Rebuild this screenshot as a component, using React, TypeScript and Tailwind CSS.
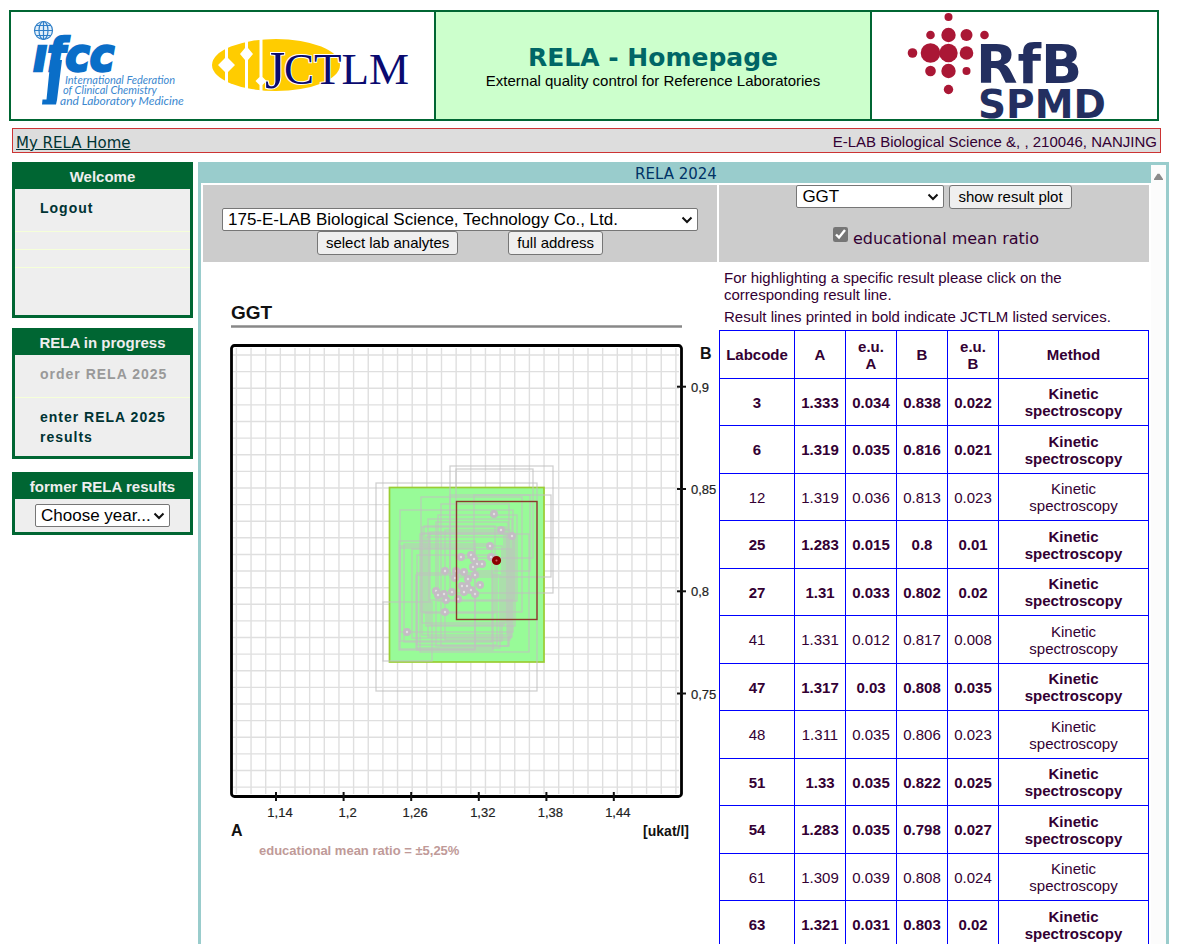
import { useState } from 'react'
import type { ReactNode } from 'react'

interface Result {
  lab: number
  a: string
  ua: string
  b: string
  ub: string
  listed: boolean
}

const results: Result[] = [
  { lab: 3, a: '1.333', ua: '0.034', b: '0.838', ub: '0.022', listed: true },
  { lab: 6, a: '1.319', ua: '0.035', b: '0.816', ub: '0.021', listed: true },
  { lab: 12, a: '1.319', ua: '0.036', b: '0.813', ub: '0.023', listed: false },
  { lab: 25, a: '1.283', ua: '0.015', b: '0.8', ub: '0.01', listed: true },
  { lab: 27, a: '1.31', ua: '0.033', b: '0.802', ub: '0.02', listed: true },
  { lab: 41, a: '1.331', ua: '0.012', b: '0.817', ub: '0.008', listed: false },
  { lab: 47, a: '1.317', ua: '0.03', b: '0.808', ub: '0.035', listed: true },
  { lab: 48, a: '1.311', ua: '0.035', b: '0.806', ub: '0.023', listed: false },
  { lab: 51, a: '1.33', ua: '0.035', b: '0.822', ub: '0.025', listed: true },
  { lab: 54, a: '1.283', ua: '0.035', b: '0.798', ub: '0.027', listed: true },
  { lab: 61, a: '1.309', ua: '0.039', b: '0.808', ub: '0.024', listed: false },
  { lab: 63, a: '1.321', ua: '0.031', b: '0.803', ub: '0.02', listed: true },
]

function IfccLogo() {
  return (
    <svg width="160" height="94" viewBox="28 16 160 94" overflow="visible" role="img" aria-label="IFCC">
      <g fill="none" stroke="#2f7fc8" strokeWidth="1.2">
        <circle cx="43.500" cy="30.500" r="9" fill="#e3f0fa" />
        <ellipse cx="43.500" cy="30.500" rx="4.500" ry="9" />
        <path d="M43.500 21.500v18M34.500 30.500h18M36 25.500h15M36 35.500h15" />
      </g>
      {/* long stem of the f */}
      <path d="M50.500 60h11.500l-5 40-1 4.500H42l.5-5h4z" fill="#0a6ec8" />
      <text x="33" y="71" fontSize="46" fontWeight="bold" fontStyle="italic" fill="#0a6ec8" stroke="#0a6ec8" strokeWidth="2.4" className="font-['DejaVu_Sans_Condensed','DejaVu_Sans',sans-serif]">ıfcc</text>
      <g fontStyle="italic" fill="#3b88cf" className="font-['Lato',sans-serif]">
        <text x="65" y="84" fontSize="11">International Federation</text>
        <text x="63" y="94" fontSize="11">of Clinical Chemistry</text>
        <text x="60" y="105" fontSize="12">and Laboratory Medicine</text>
      </g>
    </svg>
  )
}

function JctlmLogo() {
  return (
    <svg width="204" height="64" viewBox="208 34 204 64" overflow="visible" role="img" aria-label="JCTLM">
      <ellipse cx="276" cy="65" rx="64" ry="26" fill="#ffcc00" />
      <g fill="#fff">
        <path d="M225 38h3v20l7 7-7 7v20h-3V72l-7-7 7-7z" />
        <path d="M245 38h3v10l5 6-5 6v34h-3V60l-5-6 5-6z" />
        <path d="M259.500 38h3v39l4 4-4 4v9h-3v-9l-4-4 4-4z" />
      </g>
      <text x="265" y="88" fontSize="52" fill="#0a0a70" stroke="#fff" strokeWidth="2" paintOrder="stroke" className="font-['Liberation_Serif',serif]">
        J<tspan x="284" y="84" fontSize="45">CTLM</tspan>
      </text>
    </svg>
  )
}

// x, y, radius
const dots = [
  [948.5, 17, 4], [930.5, 35, 4.3], [948.5, 35, 7.2], [966.5, 35, 6], [984.5, 35, 4.3],
  [912.5, 53, 4.8], [930.5, 53, 9.8], [948.5, 53, 9.2], [966.5, 53, 6.8],
  [930.5, 71, 5.3], [948.5, 71, 7.2], [966.5, 71, 4], [948.5, 89.5, 4.7],
]

function RfbLogo() {
  return (
    <svg width="216" height="107" viewBox="907 12 216 107" overflow="visible" role="img" aria-label="RfB SPMD">
      {dots.map(([x, y, r]) => <circle key={`${x}-${y}`} cx={x} cy={y} r={r} fill="#aa1735" />)}
      <text x="976" y="83" fontSize="54" fontWeight="bold" fill="#232f60" className="font-['DejaVu_Sans',sans-serif]">
        RfB<tspan x="978" y="118" fontSize="39">SPMD</tspan>
      </text>
    </svg>
  )
}

const gridX = Array.from({ length: 31 }, (_, i) => 236.4 + i * 14.65)
const gridY = Array.from({ length: 27 }, (_, i) => 355 + i * 16.62)

const xTicks: [number, string][] = [
  [276, '1,14'], [343.6, '1,2'], [411.2, '1,26'], [478.8, '1,32'], [546.4, '1,38'], [613.8, '1,44'],
]
const yTicks: [number, string][] = [[386.7, '0,9'], [489, '0,85'], [591.3, '0,8'], [693.5, '0,75']]

// left, top, right, bottom of each uncertainty box
const boxes = [
  [376, 483, 537, 691], [450, 466, 553, 593], [456, 469, 533, 558], [450, 495, 551, 577],
  [383, 602, 432, 661], [421, 497, 522, 612], [400, 510, 513, 632], [399, 541, 475, 650],
  [404, 544, 492, 642], [441, 504, 509, 646], [438, 515, 517, 601], [422, 527, 506, 623],
  [428, 519, 512, 637], [422, 533, 507, 635], [430, 532, 504, 625], [417, 555, 497, 645],
  [417, 573, 493, 650], [412, 549, 511, 638], [420, 534, 529, 652], [474, 495, 530, 571],
  [436, 522, 508, 646], [426, 537, 515, 626], [400, 548, 475, 649], [445, 530, 510, 640],
  [416, 575, 500, 648], [424, 526, 495, 613], [429, 534, 514, 600], [400, 546, 502, 641],
]

const points = [
  [494, 514], [501, 530], [512, 536], [490, 546], [461, 557], [471, 555], [474, 559], [491, 557],
  [477, 564], [482, 564], [473, 567], [445, 571], [456, 571], [464, 572], [475, 575], [455, 578],
  [468, 579], [480, 585], [462, 586], [467, 586], [436, 591], [444, 594], [452, 592], [464, 592],
  [471, 590], [475, 594], [446, 600], [458, 599], [445, 612], [407, 632], [438, 595],
]

function YoudenPlot() {
  return (
    <svg viewBox="203 262 514 620" className="w-full" role="img" aria-label="GGT result plot">
      <g className="font-['Liberation_Sans',Arial,sans-serif]">
        <text x="231" y="319" fontSize="19" fontWeight="bold" fill="#111">GGT</text>
        <path d="M231 326.5h451" stroke="#888" strokeWidth="2.5" />
        <g stroke="#dfdfdf" strokeWidth="1.4">
          {gridX.map((x) => <path key={x} d={`M${x} 348V794`} />)}
          {gridY.map((y) => <path key={y} d={`M233 ${y}H679`} />)}
        </g>
        <rect x="389.5" y="487.5" width="154.5" height="174.5" fill="#98fb98" stroke="#9acd32" strokeWidth="1.7" />
        <g fill="none" stroke="#c0c0c0" strokeOpacity="0.8" strokeWidth="1.2">
          {boxes.map(([l, t, r, b], i) => (
            <rect key={i} x={l} y={t} width={r - l} height={b - t} />
          ))}
        </g>
        {points.map(([x, y], i) => (
          <circle key={i} cx={x} cy={y} r="2.6" fill="#e0e0e0" stroke="#c4bcc4" strokeWidth="2.8" />
        ))}
        <rect x="456.5" y="501.5" width="80.5" height="118" fill="none" stroke="#8b3a2a" strokeWidth="1.4" />
        <circle cx="496.5" cy="560.5" r="2.8" fill="#c66" stroke="#8b0000" strokeWidth="3.6" />
        <rect x="231.5" y="345.5" width="450" height="451" rx="3" fill="none" stroke="#000" strokeWidth="2.8" />
        <g stroke="#111" strokeWidth="2">
          {xTicks.map(([x]) => <path key={x} d={`M${x} 792v9`} />)}
          {yTicks.map(([y]) => <path key={y} d={`M677 ${y}h9`} />)}
        </g>
        <g fontSize="13" fill="#222" stroke="#222" strokeWidth="0.2">
          {xTicks.map(([x, label]) => <text key={x} x={x + 4} y="817" textAnchor="middle">{label}</text>)}
          {yTicks.map(([y, label]) => <text key={y} x="691" y={y + 5}>{label}</text>)}
        </g>
        <g fontWeight="bold" fill="#111">
          <text x="231" y="836" fontSize="16">A</text>
          <text x="700" y="359" fontSize="16">B</text>
          <text x="689" y="836" fontSize="14" textAnchor="end">[ukat/l]</text>
          <text x="259" y="855" fontSize="13" fill="#c09a98">educational mean ratio = ±5,25%</text>
        </g>
      </g>
    </svg>
  )
}

function Chevron() {
  return (
    <svg width="12" height="8" viewBox="0 0 12 8" className="pointer-events-none absolute right-[5px] top-2">
      <path d="M1.5 1.5 6 6l4.500-4.500" fill="none" stroke="#111" strokeWidth="2" />
    </svg>
  )
}

function Select({ label, options, className }: { label: string; options: string[]; className: string }) {
  return (
    <span className={`relative inline-block ${className}`}>
      <select aria-label={label} className="block h-[23px] w-full appearance-none rounded-[2px] border border-[#767676] bg-white pl-[5px] pr-4 text-[17px] leading-5 text-black">
        {options.map((o) => <option key={o}>{o}</option>)}
      </select>
      <Chevron />
    </span>
  )
}

function Button({ children }: { children: ReactNode }) {
  return (
    <button type="button" className="h-6 rounded-[3px] border border-[#767676] bg-[#efefef] px-2 text-[15px] leading-5 text-black">
      {children}
    </button>
  )
}

function SideBox({ title, children }: { title: string; children: ReactNode }) {
  return (
    <section className="border-[3px] border-t-0 border-[#006633] bg-[#eee]">
      <h2 className="h-[27px] bg-[#006633] pt-[5px] text-center text-[15px] font-bold leading-5 text-[#eee]">{title}</h2>
      {children}
    </section>
  )
}

export default function App() {
  const [selected, setSelected] = useState<number | null>(null)
  const [ratio, setRatio] = useState(true)

  return (
    <div className="flex h-screen flex-col overflow-hidden bg-white pt-[10px] font-['Liberation_Sans',Arial,sans-serif] text-[15px] text-[#330033]">
      <header className="ml-[9px] mr-[33px] grid h-[111px] shrink-0 grid-cols-[423fr_438fr_285fr] border-2 border-[#006633]">
        <div className="flex items-start gap-5 pl-[17px] pt-1">
          <IfccLogo />
          <div className="pt-[18px]"><JctlmLogo /></div>
        </div>
        <div className="flex flex-col items-center border-x-2 border-[#006633] bg-[#ccffcc] pt-8">
          <h1 className="font-['DejaVu_Sans',Verdana,sans-serif] text-[25px] font-bold leading-7 text-[#006666]">RELA - Homepage</h1>
          <p className="leading-[18px] text-black">External quality control for Reference Laboratories</p>
        </div>
        <div className="flex justify-center"><RfbLogo /></div>
      </header>

      <div className="ml-3 mr-[31px] mt-[7px] flex h-[25px] shrink-0 items-center justify-between border border-[#cc3333] bg-[#ddd] px-[3px]">
        <a href="#" className="pt-1 font-['DejaVu_Sans',Verdana,sans-serif] leading-5 text-[#003333] underline">My RELA Home</a>
        <span className="pt-1">E-LAB Biological Science &amp;, , 210046, NANJING</span>
      </div>

      <div className="mt-[9px] flex min-h-0 flex-1 gap-[5px] pl-3 pr-[23px]">
        <aside className="flex w-[181px] shrink-0 flex-col">
          <SideBox title="Welcome">
            <ul className="text-sm font-bold leading-5 tracking-[1px] text-[#003333]">
              <li className="h-[43px] border-b border-[#f5ffd9] pl-[25px] pt-[9px]"><a href="#">Logout</a></li>
              <li className="h-[18px] border-b border-[#f5ffd9]" />
              <li className="h-[18px] border-b border-[#f5ffd9]" />
              <li className="h-[47px]" />
            </ul>
          </SideBox>
          <div className="mt-[10px]">
            <SideBox title="RELA in progress">
              <ul className="text-sm font-bold leading-5 tracking-[1px] text-[#003333]">
                <li className="h-[43px] border-b border-[#f5ffd9] pl-[25px] pt-[9px] text-[#999]">order RELA 2025</li>
                <li className="h-[58px] pl-[25px] pr-4 pt-[9px]"><a href="#">enter RELA 2025 results</a></li>
              </ul>
            </SideBox>
          </div>
          <div className="mt-[13px]">
            <SideBox title="former RELA results">
              <div className="h-[33px] pt-[5px] text-center">
                <Select label="Year" options={['Choose year...']} className="w-[135px]" />
              </div>
            </SideBox>
          </div>
        </aside>

        <main className="flex min-w-0 flex-1 overflow-hidden border-x-[3px] border-t-[3px] border-[#99cccc]">
          <div className="min-w-0 flex-1">
            <h2 className="h-[18px] bg-[#99cccc] text-center font-['DejaVu_Sans',Verdana,sans-serif] text-[15px] leading-[18px] text-[#003366]">RELA 2024</h2>
            <div className="grid grid-cols-[514fr_430fr] gap-x-[2px] px-[2px] pt-[2px]">
              <div className="flex h-[77px] flex-col items-center bg-[#ccc] pt-[23px]">
                <Select label="Laboratory" options={['175-E-LAB Biological Science, Technology Co., Ltd.']} className="w-[476px]" />
                <div className="flex gap-[50px]">
                  <Button>select lab analytes</Button>
                  <Button>full address</Button>
                </div>
              </div>
              <div className="flex h-[77px] flex-col items-center bg-[#ccc]">
                <div className="flex gap-[5px]">
                  <Select label="Analyte" options={['GGT']} className="w-[148px]" />
                  <Button>show result plot</Button>
                </div>
                <label className="mt-[18px] flex items-start gap-[5px] pl-1 font-['DejaVu_Sans',Verdana,sans-serif] text-base leading-6">
                  <input type="checkbox" checked={ratio} onChange={(e) => setRatio(e.target.checked)} className="h-[15px] w-[15px] accent-[#767676]" />
                  educational mean ratio
                </label>
              </div>

              <YoudenPlot />

              <div>
                <div className="pl-[5px] pr-5 pt-[7px] leading-[17px]">
                  <p>For highlighting a specific result please click on the corresponding result line.</p>
                  <p className="mt-[5px]">Result lines printed in bold indicate JCTLM listed services.</p>
                </div>
                <table className="mt-[5px] w-full table-fixed border-collapse text-center leading-[17px] [&_td]:border [&_td]:border-[#0000ff] [&_th]:border [&_th]:border-[#0000ff]">
                  <colgroup>
                    <col className="w-[75px]" />
                    <col className="w-[51px]" />
                    <col className="w-[51px]" />
                    <col className="w-[51px]" />
                    <col className="w-[51px]" />
                    <col />
                  </colgroup>
                  <thead>
                    <tr className="h-12">
                      <th>Labcode</th>
                      <th>A</th>
                      <th>e.u.<br />A</th>
                      <th>B</th>
                      <th>e.u.<br />B</th>
                      <th>Method</th>
                    </tr>
                  </thead>
                  <tbody>
                    {results.map((r) => (
                      <tr
                        key={r.lab}
                        onClick={() => setSelected(r.lab)}
                        className={`odd:h-[47px] even:h-12 ${r.listed ? 'font-bold' : ''} ${selected === r.lab ? 'bg-[#ffffcc]' : ''}`}
                      >
                        <td>{r.lab}</td>
                        <td>{r.a}</td>
                        <td>{r.ua}</td>
                        <td>{r.b}</td>
                        <td>{r.ub}</td>
                        <td>Kinetic<br />spectroscopy</td>
                      </tr>
                    ))}
                  </tbody>
                </table>
              </div>
            </div>
          </div>
          <div className="flex w-[15px] shrink-0 justify-center bg-[#fcfcfc] pt-2">
            <svg width="9" height="7" viewBox="0 0 9 7"><path d="M3.500.8h2L9 6v1H0V6z" fill="#8b8b8b" /></svg>
          </div>
        </main>
      </div>
    </div>
  )
}
